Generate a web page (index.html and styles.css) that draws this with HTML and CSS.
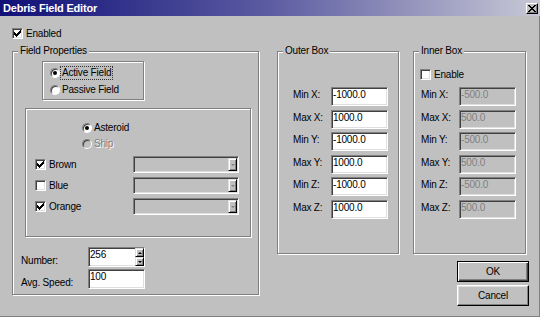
FILE: index.html
```html
<!DOCTYPE html>
<html>

<head>
	<meta charset="UTF-8">
	<title>Debris Field Editor</title>
	<link rel="stylesheet" href="styles.css">
</head>

<body>
	<div class="dialog">
		<div class="titlebar">
			<span class="title">Debris Field Editor</span>
			<span class="close">
				<svg width="8" height="7" viewBox="0 0 8 7" shape-rendering="crispEdges"><path fill="#000" d="M0 0h2v1H0zM6 0h2v1H6zM1 1h2v1H1zM5 1h2v1H5zM2 2h4v1H2zM3 3h2v1H3zM2 4h4v1H2zM1 5h2v1H1zM5 5h2v1H5zM0 6h2v1H0zM6 6h2v1H6z"/></svg>
			</span>
		</div>

		<div class="top">
			<label class="chk"><span class="box"><svg class="tick" width="7" height="7" viewBox="0 0 7 7" shape-rendering="crispEdges"><path d="M6 0h1v1H6zM5 1h2v1H5zM0 2h1v1H0zM4 2h3v1H4zM0 3h2v1H0zM3 3h3v1H3zM0 4h5v1H0zM1 5h3v1H1zM2 6h1v1H2z"/></svg></span>Enabled</label>
		</div>

		<div class="main">
			<div class="group props">
				<span class="cap">Field Properties</span>
				<div class="frame fieldtype">
					<label class="opt"><span class="radio on"></span><span class="txt focus">Active Field</span></label>
					<label class="opt"><span class="radio"></span><span class="txt">Passive Field</span></label>
				</div>

				<div class="frame kinds">
					<div class="kindopts">
						<label class="opt"><span class="radio on"></span><span class="txt">Asteroid</span></label>
						<label class="opt off"><span class="radio"></span><span class="txt">Ship</span></label>
					</div>
					<div class="colour">
						<label class="chk"><span class="box"><svg class="tick" width="7" height="7" viewBox="0 0 7 7" shape-rendering="crispEdges"><path d="M6 0h1v1H6zM5 1h2v1H5zM0 2h1v1H0zM4 2h3v1H4zM0 3h2v1H0zM3 3h3v1H3zM0 4h5v1H0zM1 5h3v1H1zM2 6h1v1H2z"/></svg></span>Brown</label>
						<span class="combo"><span class="drop"></span></span>
					</div>
					<div class="colour">
						<label class="chk"><span class="box"></span>Blue</label>
						<span class="combo"><span class="drop"></span></span>
					</div>
					<div class="colour">
						<label class="chk"><span class="box"><svg class="tick" width="7" height="7" viewBox="0 0 7 7" shape-rendering="crispEdges"><path d="M6 0h1v1H6zM5 1h2v1H5zM0 2h1v1H0zM4 2h3v1H4zM0 3h2v1H0zM3 3h3v1H3zM0 4h5v1H0zM1 5h3v1H1zM2 6h1v1H2z"/></svg></span>Orange</label>
						<span class="combo"><span class="drop"></span></span>
					</div>
				</div>

				<div class="field">
					<span class="lbl">Number:</span>
					<span class="edit spin">256<span class="spinbtns"><span class="up"></span><span class="down"></span></span></span>
				</div>
				<div class="field">
					<span class="lbl">Avg. Speed:</span>
					<span class="edit">100</span>
				</div>
			</div>

			<div class="group outer">
				<span class="cap">Outer Box</span>
				<div class="rows">
					<div class="row"><span class="lbl">Min X:</span><span class="edit">-1000.0</span></div>
					<div class="row"><span class="lbl">Max X:</span><span class="edit">1000.0</span></div>
					<div class="row"><span class="lbl">Min Y:</span><span class="edit">-1000.0</span></div>
					<div class="row"><span class="lbl">Max Y:</span><span class="edit">1000.0</span></div>
					<div class="row"><span class="lbl">Min Z:</span><span class="edit">-1000.0</span></div>
					<div class="row"><span class="lbl">Max Z:</span><span class="edit">1000.0</span></div>
				</div>
			</div>

			<div class="side">
				<div class="group inner">
					<span class="cap">Inner Box</span>
					<label class="chk"><span class="box"></span>Enable</label>
					<div class="rows">
						<div class="row"><span class="lbl">Min X:</span><span class="edit off">-500.0</span></div>
						<div class="row"><span class="lbl">Max X:</span><span class="edit off">500.0</span></div>
						<div class="row"><span class="lbl">Min Y:</span><span class="edit off">-500.0</span></div>
						<div class="row"><span class="lbl">Max Y:</span><span class="edit off">500.0</span></div>
						<div class="row"><span class="lbl">Min Z:</span><span class="edit off">-500.0</span></div>
						<div class="row"><span class="lbl">Max Z:</span><span class="edit off">500.0</span></div>
					</div>
				</div>
				<div class="btn default ok">OK</div>
				<div class="btn cancel">Cancel</div>
			</div>
		</div>
	</div>
</body>

</html>
```

FILE: styles.css
```css
body {
	margin: 0;
	background: #c0c0c0;
	font: 10px/12px "Liberation Sans", Arial, sans-serif;
	letter-spacing: -0.2px;
	color: #000;
}

.dialog {
	width: 540px;
	height: 317px;
	box-sizing: border-box;
	overflow: hidden;
	box-shadow: inset -1px -1px 0 #808080;
}

/* title bar */
.titlebar {
	height: 16px;
	display: flex;
	align-items: center;
	justify-content: space-between;
	padding: 0 2px 0 3px;
	background: linear-gradient(90deg, #101078, #5c5ca2 50%, #c8c8d6);
}

.title {
	color: #fff;
	font-weight: bold;
	font-size: 11px;
	line-height: 16px;
}

.close {
	width: 12px;
	height: 11px;
	box-sizing: border-box;
	display: flex;
	align-items: center;
	justify-content: center;
	background: #c0c0c0;
	border: 1px solid;
	border-color: #fff #000 #000 #fff;
	box-shadow: inset -1px -1px 0 #808080;
}

.top {
	height: 35px;
	display: flex;
	align-items: center;
	padding-left: 12px;
}

.main {
	display: flex;
	align-items: flex-start;
	padding-left: 12px;
}

/* group boxes */
.group,
.frame {
	box-sizing: border-box;
	border: 1px solid #808080;
	box-shadow: inset 1px 1px 0 #fff, 1px 1px 0 #fff;
}

.cap {
	display: block;
	width: max-content;
	height: 12px;
	line-height: 12px;
	margin: -7px 0 0 5px;
	padding: 0 2px;
	background: #c0c0c0;
}

.props {
	width: 247px;
	height: 244px;
}

.outer {
	width: 122px;
	height: 203px;
	margin-left: 18px;
}

.side {
	width: 116px;
	margin-left: 14px;
	display: flex;
	flex-direction: column;
	align-items: flex-end;
}

.inner {
	width: 113px;
	height: 203px;
	align-self: flex-start;
}

/* checkboxes and radios */
.chk {
	display: flex;
	align-items: center;
	height: 13px;
}

.box {
	width: 11px;
	height: 11px;
	box-sizing: border-box;
	margin-right: 3px;
	display: flex;
	align-items: center;
	justify-content: center;
	background: #fff;
	border: 1px solid;
	border-color: #808080 #fff #fff #808080;
	box-shadow: inset 1px 1px 0 #404040, inset -1px -1px 0 #dfdfdf;
}

.tick {
	fill: #000;
}

.opt {
	display: flex;
	align-items: center;
	height: 17px;
}

.radio {
	width: 10px;
	height: 10px;
	box-sizing: border-box;
	margin-right: 1px;
	display: flex;
	align-items: center;
	justify-content: center;
	border-radius: 50%;
	background: #fff;
	border: 1px solid;
	border-color: #808080 #fff #fff #808080;
	box-shadow: inset 1px 1px 0 #404040;
}

.radio.on::after {
	content: "";
	width: 4px;
	height: 4px;
	border-radius: 50%;
	background: #000;
}

.txt {
	padding: 0 1px;
	line-height: 12px;
}

.focus {
	outline: 1px dotted #333;
}

.off .radio {
	background: #c0c0c0;
}

.off .txt {
	color: #808080;
	text-shadow: 1px 1px 0 #fff;
}

/* field properties */
.fieldtype {
	width: 102px;
	height: 39px;
	margin: 4px 0 0 29px;
	padding: 2px 0 0 7px;
}

.kinds {
	width: 226px;
	height: 129px;
	margin: 8px 0 0 12px;
	padding-top: 11px;
}

.kindopts {
	padding-left: 56px;
}

.kindopts .opt {
	height: 16px;
}

.colour {
	display: flex;
	align-items: center;
	height: 17px;
	margin-top: 4px;
	padding-left: 9px;
}

.colour .chk {
	width: 98px;
}

.combo {
	width: 106px;
	height: 17px;
	box-sizing: border-box;
	display: flex;
	justify-content: flex-end;
	padding: 1px;
	background: #c0c0c0;
	border: 1px solid;
	border-color: #808080 #fff #fff #808080;
	box-shadow: inset 1px 1px 0 #404040, inset -1px -1px 0 #dfdfdf;
}

.drop {
	width: 9px;
	box-sizing: border-box;
	display: flex;
	align-items: center;
	justify-content: center;
	background: #c0c0c0;
	border: 1px solid;
	border-color: #dfdfdf #000 #000 #dfdfdf;
	box-shadow: inset 1px 1px 0 #fff, inset -1px -1px 0 #808080;
}

.drop::after {
	content: "";
	border-top: 2px solid #808080;
	border-left: 2px solid transparent;
	border-right: 2px solid transparent;
}

.field {
	display: flex;
	align-items: flex-end;
	margin-top: 2px;
	padding-left: 8px;
}

.kinds + .field {
	margin-top: 10px;
}

.field .lbl {
	width: 67px;
}

.field .edit {
	height: 20px;
}

/* edit boxes */
.edit {
	width: 57px;
	height: 19px;
	box-sizing: border-box;
	padding: 1px 0 0 1px;
	line-height: 11px;
	background: #fff;
	border: 1px solid;
	border-color: #808080 #fff #fff #808080;
	box-shadow: inset 1px 1px 0 #404040, inset -1px -1px 0 #dfdfdf;
}

.edit.off {
	background: #c0c0c0;
	color: #808080;
}

.edit.spin {
	display: flex;
	justify-content: space-between;
}

.spinbtns {
	width: 9px;
	height: 18px;
	margin-top: -1px;
	display: flex;
	flex-direction: column;
}

.spinbtns span {
	height: 9px;
	box-sizing: border-box;
	display: flex;
	align-items: center;
	justify-content: center;
	background: #c0c0c0;
	border: 1px solid;
	border-color: #dfdfdf #000 #000 #dfdfdf;
	box-shadow: inset 1px 1px 0 #fff, inset -1px -1px 0 #808080;
}

.spinbtns .up::after {
	content: "";
	border-bottom: 2px solid #000;
	border-left: 2px solid transparent;
	border-right: 2px solid transparent;
}

.spinbtns .down::after {
	content: "";
	border-top: 2px solid #000;
	border-left: 2px solid transparent;
	border-right: 2px solid transparent;
}

/* coordinate rows */
.rows {
	display: flex;
	flex-direction: column;
	gap: 3.6px;
}

.outer .rows {
	margin-top: 30px;
	padding-left: 15px;
}

.inner .chk {
	margin: 11px 0 0 6px;
}

.inner .rows {
	margin-top: 6px;
	padding-left: 7px;
}

.row {
	display: flex;
	align-items: baseline;
}

.row .lbl {
	width: 38px;
}

/* buttons */
.btn {
	width: 72px;
	height: 21px;
	box-sizing: border-box;
	display: flex;
	align-items: center;
	justify-content: center;
	background: #c0c0c0;
	border: 1px solid;
	border-color: #fff #000 #000 #fff;
	box-shadow: inset -1px -1px 0 #808080, inset 1px 1px 0 #dfdfdf;
}

.btn.default {
	border-color: #000;
	box-shadow: inset 1px 1px 0 #fff, inset -1px -1px 0 #404040, inset -2px -2px 0 #808080;
}

.ok {
	margin-top: 7px;
}

.cancel {
	margin-top: 3px;
}
```
